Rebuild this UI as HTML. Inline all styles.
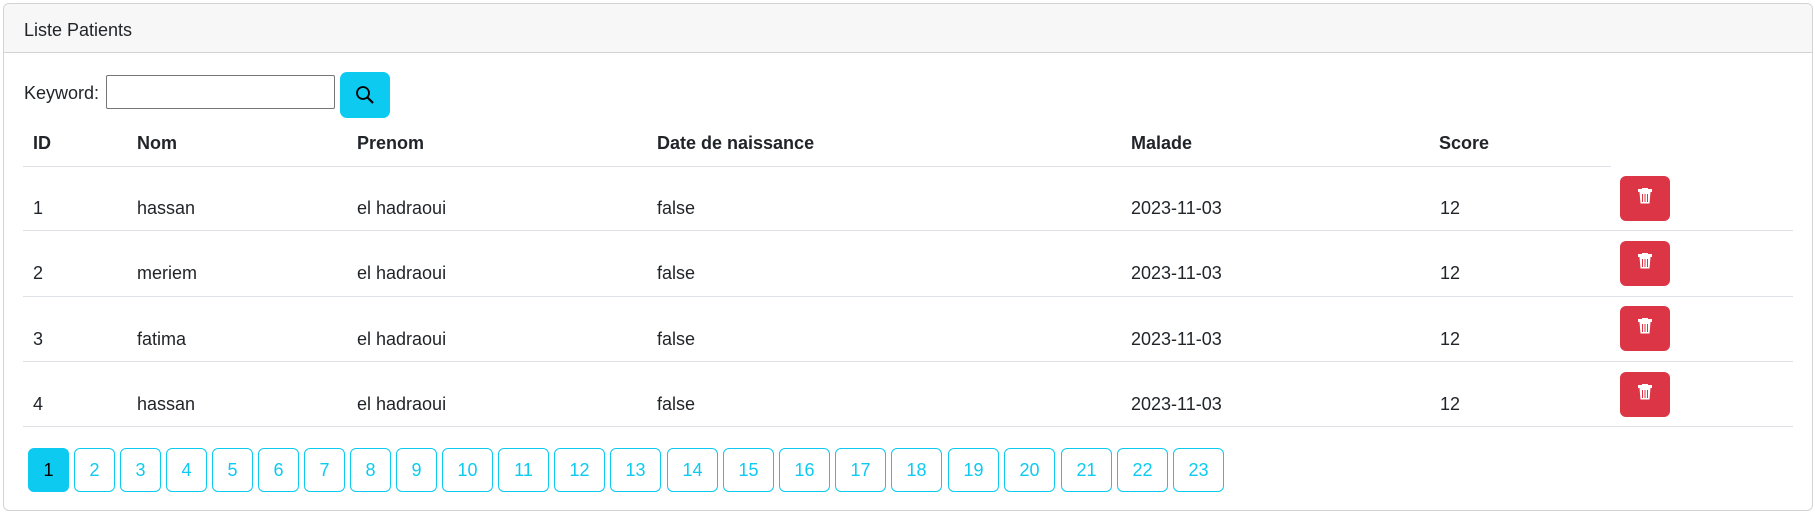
<!DOCTYPE html>
<html><head><meta charset="utf-8"><style>
*{box-sizing:border-box;margin:0;padding:0}
body{width:1815px;height:514px;background:#fff;font-family:"Liberation Sans",sans-serif;color:#212529;font-size:18px;position:relative;overflow:hidden}
.card{position:absolute;left:3px;top:3px;width:1810px;height:508px;border:1px solid #d3d3d3;border-radius:6px;overflow:hidden}
.hdr{position:absolute;left:0;top:0;right:0;height:49px;background:#f7f7f7;border-bottom:1px solid #d3d3d3}
.a{position:absolute;white-space:nowrap;line-height:20px}
.line{position:absolute;height:1px;background:#dee2e6}
.del{position:absolute;left:1620px;width:50px;height:45px;background:#dc3545;border-radius:6px}
.del svg{position:absolute;left:18px;top:12px}
.pg{position:absolute;top:448px;height:44px;border:1px solid #0dcaf0;border-radius:6px;color:#0dcaf0;text-align:center;line-height:42px;font-size:18px}
</style></head><body>
<div class="card"><div class="hdr"></div></div>
<div class="a" style="left:24px;top:20px">Liste Patients</div>
<div class="a" style="left:24px;top:83px">Keyword:</div>
<div style="position:absolute;left:106px;top:75px;width:229px;height:34px;border:1px solid #767676;border-radius:2px"></div>
<div style="position:absolute;left:340px;top:72px;width:50px;height:46px;background:#0dcaf0;border-radius:7px">
<svg style="position:absolute;left:15px;top:13px" width="20" height="20" viewBox="0 0 20 20"><circle cx="8" cy="8" r="6" fill="none" stroke="#000" stroke-width="1.8"/><path d="M12.5 12.5L18 18" stroke="#000" stroke-width="2.2"/></svg></div>
<div class="a" style="left:33px;top:133px;font-weight:bold">ID</div>
<div class="a" style="left:137px;top:133px;font-weight:bold">Nom</div>
<div class="a" style="left:357px;top:133px;font-weight:bold">Prenom</div>
<div class="a" style="left:657px;top:133px;font-weight:bold">Date de naissance</div>
<div class="a" style="left:1131px;top:133px;font-weight:bold">Malade</div>
<div class="a" style="left:1439px;top:133px;font-weight:bold">Score</div>
<div class="line" style="left:23px;top:166px;width:1588px"></div>

<div class="a" style="left:33px;top:198px">1</div><div class="a" style="left:137px;top:198px">hassan</div><div class="a" style="left:357px;top:198px">el hadraoui</div><div class="a" style="left:657px;top:198px">false</div><div class="a" style="left:1131px;top:198px">2023-11-03</div><div class="a" style="left:1440px;top:198px">12</div>
<div class="del" style="top:176px"><svg width="14" height="16" viewBox="0 0 14 16"><rect x="0" y="1" width="14" height="3" fill="#fff"/><rect x="4" y="0" width="6" height="2" fill="#fff"/><path d="M1.5 4h11l-1 11.5h-9z" fill="#fff"/><path d="M4.5 6v8M7 6v8M9.5 6v8" stroke="#dc3545" stroke-width="1"/></svg></div>
<div class="line" style="left:23px;top:230px;width:1770px"></div>

<div class="a" style="left:33px;top:263px">2</div><div class="a" style="left:137px;top:263px">meriem</div><div class="a" style="left:357px;top:263px">el hadraoui</div><div class="a" style="left:657px;top:263px">false</div><div class="a" style="left:1131px;top:263px">2023-11-03</div><div class="a" style="left:1440px;top:263px">12</div>
<div class="del" style="top:241px"><svg width="14" height="16" viewBox="0 0 14 16"><rect x="0" y="1" width="14" height="3" fill="#fff"/><rect x="4" y="0" width="6" height="2" fill="#fff"/><path d="M1.5 4h11l-1 11.5h-9z" fill="#fff"/><path d="M4.5 6v8M7 6v8M9.5 6v8" stroke="#dc3545" stroke-width="1"/></svg></div>
<div class="line" style="left:23px;top:296px;width:1770px"></div>

<div class="a" style="left:33px;top:329px">3</div><div class="a" style="left:137px;top:329px">fatima</div><div class="a" style="left:357px;top:329px">el hadraoui</div><div class="a" style="left:657px;top:329px">false</div><div class="a" style="left:1131px;top:329px">2023-11-03</div><div class="a" style="left:1440px;top:329px">12</div>
<div class="del" style="top:306px"><svg width="14" height="16" viewBox="0 0 14 16"><rect x="0" y="1" width="14" height="3" fill="#fff"/><rect x="4" y="0" width="6" height="2" fill="#fff"/><path d="M1.5 4h11l-1 11.5h-9z" fill="#fff"/><path d="M4.5 6v8M7 6v8M9.5 6v8" stroke="#dc3545" stroke-width="1"/></svg></div>
<div class="line" style="left:23px;top:361px;width:1770px"></div>

<div class="a" style="left:33px;top:394px">4</div><div class="a" style="left:137px;top:394px">hassan</div><div class="a" style="left:357px;top:394px">el hadraoui</div><div class="a" style="left:657px;top:394px">false</div><div class="a" style="left:1131px;top:394px">2023-11-03</div><div class="a" style="left:1440px;top:394px">12</div>
<div class="del" style="top:372px"><svg width="14" height="16" viewBox="0 0 14 16"><rect x="0" y="1" width="14" height="3" fill="#fff"/><rect x="4" y="0" width="6" height="2" fill="#fff"/><path d="M1.5 4h11l-1 11.5h-9z" fill="#fff"/><path d="M4.5 6v8M7 6v8M9.5 6v8" stroke="#dc3545" stroke-width="1"/></svg></div>
<div class="line" style="left:23px;top:426px;width:1770px"></div>

<div class="pg" style="left:28px;width:41px;background:#0dcaf0;color:#000">1</div>
<div class="pg" style="left:74px;width:41px">2</div>
<div class="pg" style="left:120px;width:41px">3</div>
<div class="pg" style="left:166px;width:41px">4</div>
<div class="pg" style="left:212px;width:41px">5</div>
<div class="pg" style="left:258px;width:41px">6</div>
<div class="pg" style="left:304px;width:41px">7</div>
<div class="pg" style="left:350px;width:41px">8</div>
<div class="pg" style="left:396px;width:41px">9</div>
<div class="pg" style="left:442px;width:51px">10</div>
<div class="pg" style="left:498px;width:51px">11</div>
<div class="pg" style="left:554px;width:51px">12</div>
<div class="pg" style="left:610px;width:51px">13</div>
<div class="pg" style="left:667px;width:51px">14</div>
<div class="pg" style="left:723px;width:51px">15</div>
<div class="pg" style="left:779px;width:51px">16</div>
<div class="pg" style="left:835px;width:51px">17</div>
<div class="pg" style="left:891px;width:51px">18</div>
<div class="pg" style="left:948px;width:51px">19</div>
<div class="pg" style="left:1004px;width:51px">20</div>
<div class="pg" style="left:1061px;width:51px">21</div>
<div class="pg" style="left:1117px;width:51px">22</div>
<div class="pg" style="left:1173px;width:51px">23</div>
</body></html>
